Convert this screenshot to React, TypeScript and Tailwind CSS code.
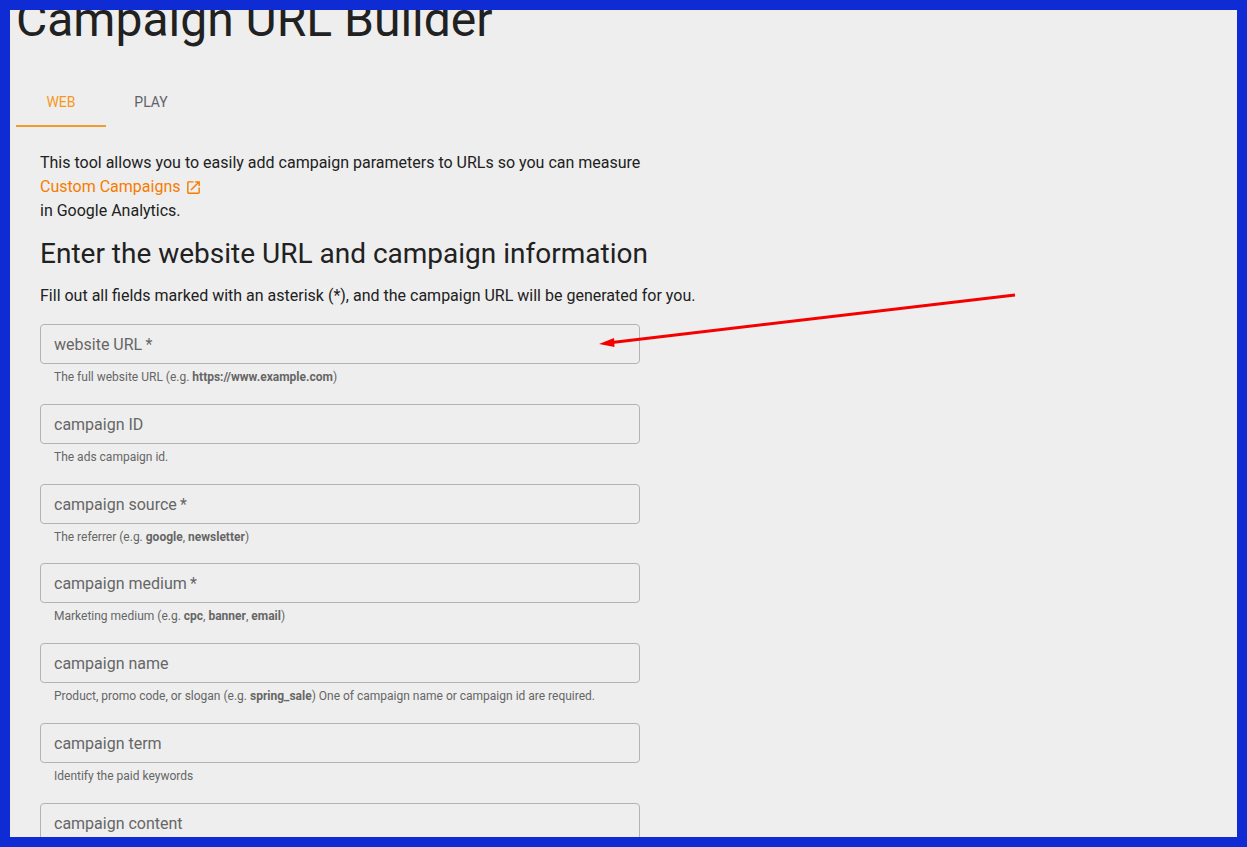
import type { ReactNode } from "react";

function Field({ label, children }: { label: string; children?: ReactNode }) {
  return (
    <div className="h-[79.75px] w-[600px] shrink-0">
      <div className="flex h-10 items-center rounded border border-[#b3b3b3] px-[13px] pt-[2px] text-base text-[#666666]">
        {label}
      </div>
      {children && <p className="mt-[3px] px-[14px] text-xs leading-[20px] text-[#666666]">{children}</p>}
    </div>
  );
}

export default function App() {
  return (
    <div className="relative h-[847px] w-[1247px] overflow-hidden border-[10px] border-[#0f2bd4] bg-[#eeeeee] font-['Roboto',sans-serif] text-[#212121]">
      {/* page title is scrolled off the top */}
      <h1 className="-mt-[18px] ml-[6px] text-5xl leading-[56px] font-normal">Campaign URL Builder</h1>

      <div className="mt-[31px] ml-[6px] flex h-[48px] text-sm">
        <div className="flex w-[90px] items-center justify-center border-b-2 border-[#f29c2e] text-[#f7981d]">WEB</div>
        <div className="flex w-[90px] items-center justify-center pb-[2px] text-[#5f6368]">PLAY</div>
      </div>

      <div className="ml-[30px]">
        <p className="mt-[24px] text-base leading-6">This tool allows you to easily add campaign parameters to URLs so you can measure</p>
        <p className="flex items-center gap-[4px] text-base leading-6 text-[#f57c00]">
          Custom Campaigns
          <svg className="h-[17px] w-[17px]" viewBox="0 0 24 24" fill="currentColor">
            <path d="M19 19H5V5h7V3H5c-1.11 0-2 .9-2 2v14c0 1.1.89 2 2 2h14c1.1 0 2-.9 2-2v-7h-2v7zM14 3v2h3.59l-9.83 9.83 1.41 1.41L19 6.41V10h2V3h-7z" />
          </svg>
        </p>
        <p className="text-base leading-6">in Google Analytics.</p>
        <h2 className="mt-[15px] text-[28px] leading-[32px] font-normal">Enter the website URL and campaign information</h2>
        <p className="mt-[14px] mb-[16px] text-base leading-6">
          Fill out all fields marked with an asterisk (*), and the campaign URL will be generated for you.
        </p>

        <div className="flex flex-col">
          <Field label={"website URL\u2009*"}>
            The full website URL (e.g. <b className="font-bold">https://www.example.com</b>)
          </Field>
          <Field label="campaign ID">The ads campaign id.</Field>
          <Field label={"campaign source\u2009*"}>
            The referrer (e.g. <b className="font-bold">google</b>, <b className="font-bold">newsletter</b>)
          </Field>
          <Field label={"campaign medium\u2009*"}>
            Marketing medium (e.g. <b className="font-bold">cpc</b>, <b className="font-bold">banner</b>, <b className="font-bold">email</b>)
          </Field>
          <Field label="campaign name">
            Product, promo code, or slogan (e.g. <b className="font-bold">spring_sale</b>) One of campaign name or campaign id are required.
          </Field>
          <Field label="campaign term">Identify the paid keywords</Field>
          <Field label="campaign content" />
        </div>
      </div>

      {/* red annotation arrow */}
      <svg className="absolute top-[-10px] left-[-10px]" width="1247" height="847" fill="none">
        <line x1="1015" y1="295" x2="612" y2="342.5" stroke="#f40000" strokeWidth="3" />
        <polygon points="599,344 614,338 614.5,347" fill="#f40000" />
      </svg>
    </div>
  );
}
